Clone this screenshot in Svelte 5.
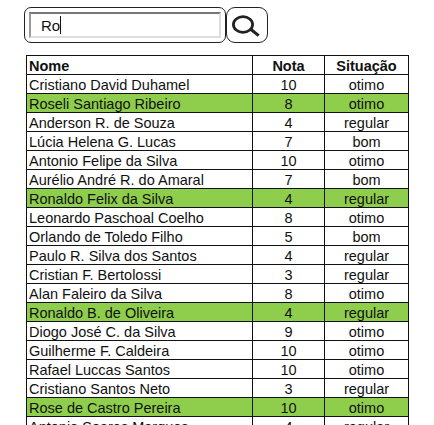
<script>
  const alunos = [
    ["Cristiano David Duhamel", 10, "otimo"],
    ["Roseli Santiago Ribeiro", 8, "otimo", true],
    ["Anderson R. de Souza", 4, "regular"],
    ["Lúcia Helena G. Lucas", 7, "bom"],
    ["Antonio Felipe da Silva", 10, "otimo"],
    ["Aurélio André R. do Amaral", 7, "bom"],
    ["Ronaldo Felix da Silva", 4, "regular", true],
    ["Leonardo Paschoal Coelho", 8, "otimo"],
    ["Orlando de Toledo Filho", 5, "bom"],
    ["Paulo R. Silva dos Santos", 4, "regular"],
    ["Cristian F. Bertolossi", 3, "regular"],
    ["Alan Faleiro da Silva", 8, "otimo"],
    ["Ronaldo B. de Oliveira", 4, "regular", true],
    ["Diogo José C. da Silva", 9, "otimo"],
    ["Guilherme F. Caldeira", 10, "otimo"],
    ["Rafael Luccas Santos", 10, "otimo"],
    ["Cristiano Santos Neto", 3, "regular"],
    ["Rose de Castro Pereira", 10, "otimo", true],
    ["Antonio Soares Marques", 4, "regular"],
  ];
</script>

<main>
  <div class="busca">
    <div class="campo">
      <div class="input"><span>Ro</span><i class="cursor"></i></div>
    </div>
    <button aria-label="Buscar">
      <svg width="30" height="28" viewBox="0 0 30 28">
        <ellipse cx="11" cy="13.5" rx="9.6" ry="7.8" fill="none" stroke="#222" stroke-width="2.8" />
        <path d="M19 18.5l7.7 6.2" fill="none" stroke="#222" stroke-width="3" />
      </svg>
    </button>
  </div>

  <table>
    <thead>
      <tr>
        <th class="nome">Nome</th>
        <th>Nota</th>
        <th>Situação</th>
      </tr>
    </thead>
    <tbody>
      {#each alunos as [nome, nota, situacao, marcado]}
        <tr class:marcado>
          <td class="nome">{nome}</td>
          <td>{nota}</td>
          <td>{situacao}</td>
        </tr>
      {/each}
    </tbody>
  </table>
</main>

<style>
  :global(body) {
    background: #fff;
    overflow: hidden;
  }

  main {
    height: 425px;
    overflow: hidden;
    padding: 7px 0 0 24px;
    box-sizing: border-box;
    font-family: "Liberation Sans", Arial, sans-serif;
    color: #111;
  }

  .busca {
    display: flex;
    height: 36px;
    margin-bottom: 12px;
  }

  .campo {
    width: 202px;
    border: 1px solid #222;
    border-radius: 7px;
    padding: 4px;
    box-sizing: border-box;
  }

  .input {
    height: 100%;
    box-sizing: border-box;
    border: 2px solid;
    border-color: #777 #ddd #ddd #999;
    display: flex;
    align-items: center;
    padding-left: 10px;
    font-size: 15px;
  }

  .cursor {
    width: 1px;
    height: 18px;
    background: #111;
  }

  button {
    width: 42px;
    padding: 0;
    background: #fff;
    border: 1px solid #222;
    border-radius: 9px;
    display: flex;
    align-items: center;
    justify-content: center;
  }

  table {
    border-collapse: collapse;
    table-layout: fixed;
    width: 383px;
    margin-left: 2px;
    font-size: 14.5px;
  }

  th,
  td {
    height: 19px;
    padding: 2px 0 0;
    border: 1px solid #111;
    text-align: center;
    line-height: 16px;
    box-sizing: border-box;
  }

  th:nth-child(1) {
    width: 226px;
  }

  th:nth-child(2) {
    width: 72px;
  }

  .nome {
    text-align: left;
    padding-left: 2px;
  }

  .marcado td {
    background: #8fce4c;
  }
</style>
